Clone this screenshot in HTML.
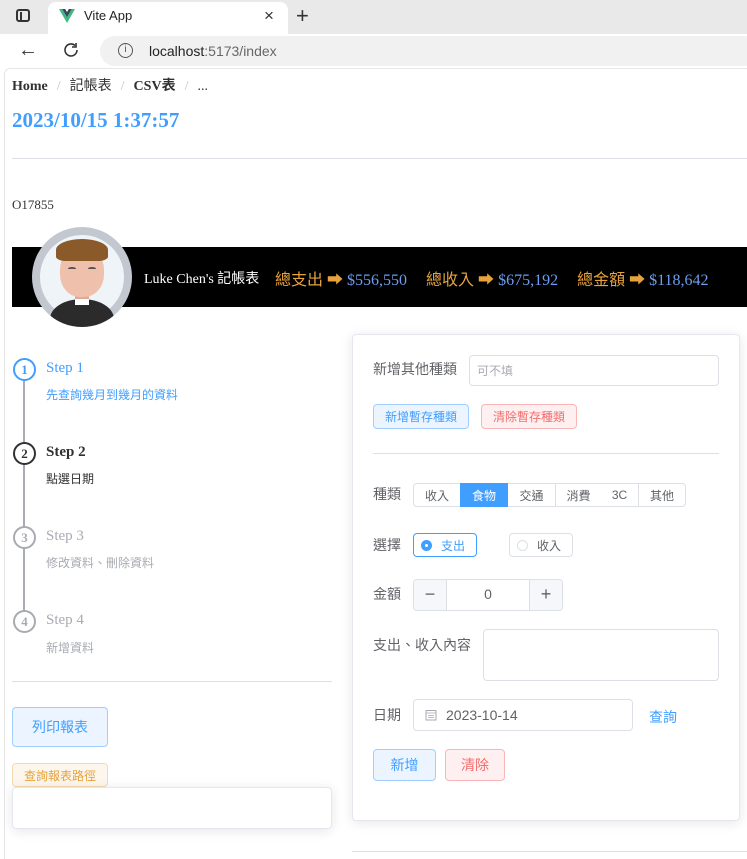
<!DOCTYPE html>
<html><head><meta charset="utf-8"><style>
*{box-sizing:border-box;margin:0;padding:0}
body{width:747px;height:859px;overflow:hidden;background:#fff;position:relative;font-family:"Liberation Sans","Noto Sans CJK TC",sans-serif;color:#606266}
.a{position:absolute}
.serif{font-family:"Liberation Serif","Noto Serif CJK SC",serif}
.cjk{font-family:"Liberation Sans","Noto Sans CJK TC",sans-serif}
.btn{position:absolute;border:1px solid;border-radius:4px;display:flex;align-items:center;justify-content:center;font-size:13px}
.bp{background:#ecf5ff;border-color:#a0cfff;color:#409eff}
.bd{background:#fef0f0;border-color:#fab6b6;color:#f56c6c}
.lbl{position:absolute;font-size:14px;color:#606266;line-height:20px}
.inp{position:absolute;border:1px solid #dcdfe6;border-radius:4px;background:#fff}
.seg{position:absolute;top:483px;height:24px;border:1px solid #dcdfe6;font-size:12px;display:flex;align-items:center;justify-content:center;color:#606266;background:#fff}
.circ{position:absolute;left:13px;width:23px;height:23px;border:2px solid;border-radius:50%;background:#fff;font-family:"Liberation Serif",serif;font-weight:bold;font-size:13px;display:flex;align-items:center;justify-content:center}
.st{position:absolute;left:46px;font-family:"Liberation Serif",serif;font-size:15px}
.sd{position:absolute;left:46px;font-size:12px}
</style></head><body>
<!-- browser chrome -->
<div class="a" style="left:0;top:0;width:747px;height:34px;background:#e9e9e9"></div>
<div class="a" style="left:48px;top:2px;width:240px;height:32px;background:#fff;border-radius:8px 8px 0 0"></div>
<div class="a" style="left:16px;top:9px;width:14px;height:13px;border:2px solid #333;border-radius:3px"></div>
<div class="a" style="left:16px;top:12px;width:6px;height:10px;border-right:2px solid #333"></div>
<svg class="a" style="left:59px;top:9px" width="16" height="14" viewBox="0 0 16 14"><path d="M0 0h3.2L8 8.3 12.8 0H16L8 14z" fill="#41b883"/><path d="M3.2 0h3L8 3.1 9.8 0h3L8 8.3z" fill="#35495e"/></svg>
<div class="a" style="left:84px;top:8px;font-size:13px;color:#222">Vite App</div>
<div class="a" style="left:264px;top:6px;font-size:17px;color:#333">×</div>
<div class="a" style="left:296px;top:3px;font-size:22px;color:#333;font-weight:300">+</div>
<div class="a" style="left:0;top:34px;width:747px;height:34px;background:#fff"></div>
<div class="a" style="left:18px;top:39px;font-size:20px;color:#333">←</div>
<svg class="a" style="left:62px;top:41px" width="18" height="18" viewBox="0 0 18 18"><path d="M15 9a6 6 0 1 1-2-4.5" fill="none" stroke="#333" stroke-width="1.6"/><path d="M14 2v4h-4" fill="none" stroke="#333" stroke-width="1.6"/></svg>
<div class="a" style="left:100px;top:36px;width:660px;height:30px;background:#f1f1f1;border-radius:15px"></div>
<div class="a" style="left:118px;top:43px;width:15px;height:15px;border:1.5px solid #555;border-radius:50%;font-size:10px;text-align:center;line-height:12px;color:#555">i</div>
<div class="a" style="left:149px;top:43px;font-size:14px;color:#222">localhost<span style="color:#666">:5173/index</span></div>
<div class="a" style="left:4px;top:68px;width:743px;height:791px;border-left:1px solid #e6e6e6;border-top:1px solid #e6e6e6;border-radius:6px 0 0 0"></div>

<div class="a serif" style="left:12px;top:75px;font-size:14px;color:#303133;white-space:nowrap"><b>Home</b><span style="color:#c0c4cc;margin:0 9px;font-weight:normal">/</span><span class="cjk">記帳表</span><span style="color:#c0c4cc;margin:0 9px">/</span><b>CSV<span class="cjk" style="font-weight:bold">表</span></b><span style="color:#c0c4cc;margin:0 9px">/</span>...</div>
<div class="a serif" style="left:12px;top:108px;font-size:21px;font-weight:bold;color:#409eff">2023/10/15 1:37:57</div>
<div class="a" style="left:12px;top:158px;width:735px;height:1px;background:#dcdfe6"></div>
<div class="a serif" style="left:12px;top:197px;font-size:13px;color:#333">O17855</div>

<div class="a" style="left:12px;top:247px;width:735px;height:60px;background:#000"></div>
<div class="a" style="left:32px;top:227px;width:100px;height:100px;border-radius:50%;background:#c2c7d0;overflow:hidden">
 <div class="a" style="left:8px;top:8px;width:84px;height:84px;border-radius:50%;background:#eef4f8"></div>
 <div class="a" style="left:18px;top:72px;width:64px;height:40px;border-radius:50% 50% 0 0;background:#2b2b2b"></div>
 <div class="a" style="left:43px;top:68px;width:14px;height:10px;background:#fff"></div>
 <div class="a" style="left:43px;top:56px;width:14px;height:16px;background:#e0a993"></div>
 <div class="a" style="left:28px;top:20px;width:44px;height:50px;border-radius:45%;background:#efc1ad"></div>
 <div class="a" style="left:24px;top:12px;width:52px;height:22px;border-radius:50% 50% 20% 20%;background:#8a5a2b"></div>
 <div class="a" style="left:36px;top:40px;width:8px;height:3px;border-top:2px solid #555;border-radius:50%"></div>
 <div class="a" style="left:56px;top:40px;width:8px;height:3px;border-top:2px solid #555;border-radius:50%"></div>
</div>
<div class="a serif" style="left:144px;top:268px;font-size:14px;color:#fff;white-space:nowrap">Luke Chen's <span class="cjk">記帳表</span></div>
<div class="a serif" style="left:275px;top:266px;font-size:16px;white-space:nowrap;color:#e6a23c"><span class="cjk">總支出</span> ➡ <span style="color:#6d9df0">$556,550</span><span style="display:inline-block;width:19px"></span><span class="cjk">總收入</span> ➡ <span style="color:#6d9df0">$675,192</span><span style="display:inline-block;width:19px"></span><span class="cjk">總金額</span> ➡ <span style="color:#6d9df0">$118,642</span></div>

<!-- steps -->
<div class="a" style="left:23px;top:370px;width:2px;height:252px;background:#a8abb2"></div>
<div class="circ" style="top:358px;border-color:#409eff;color:#409eff">1</div>
<div class="circ" style="top:442px;border-color:#303133;color:#303133">2</div>
<div class="circ" style="top:526px;border-color:#a8abb2;color:#a8abb2">3</div>
<div class="circ" style="top:610px;border-color:#a8abb2;color:#a8abb2">4</div>
<div class="st" style="top:360px;color:#409eff">Step 1</div>
<div class="sd" style="top:386px;color:#409eff">先查詢幾月到幾月的資料</div>
<div class="st" style="top:444px;color:#303133;font-weight:bold">Step 2</div>
<div class="sd" style="top:470px;color:#303133">點選日期</div>
<div class="st" style="top:528px;color:#a8abb2">Step 3</div>
<div class="sd" style="top:554px;color:#a8abb2">修改資料、刪除資料</div>
<div class="st" style="top:612px;color:#a8abb2">Step 4</div>
<div class="sd" style="top:639px;color:#a8abb2">新增資料</div>
<div class="a" style="left:12px;top:681px;width:320px;height:1px;background:#dcdfe6"></div>
<div class="btn bp" style="left:12px;top:707px;width:96px;height:40px;font-size:14px">列印報表</div>
<div class="btn" style="left:12px;top:763px;width:96px;height:24px;background:#fdf6ec;border-color:#f5dab1;color:#e6a23c;font-size:12px">查詢報表路徑</div>
<div class="a" style="left:12px;top:787px;width:320px;height:42px;border:1px solid #e4e7ed;border-radius:4px;box-shadow:0 2px 12px rgba(0,0,0,.1);background:#fff"></div>

<!-- right card -->
<div class="a" style="left:352px;top:334px;width:388px;height:487px;border:1px solid #e4e7ed;border-radius:4px;box-shadow:0 2px 12px rgba(0,0,0,.1);background:#fff"></div>
<div class="lbl" style="left:373px;top:359px">新增其他種類</div>
<div class="inp" style="left:469px;top:355px;width:250px;height:31px"></div>
<div class="a" style="left:477px;top:362px;font-size:12px;color:#a8abb2">可不填</div>
<div class="btn bp" style="left:373px;top:404px;width:96px;height:25px;font-size:12px">新增暫存種類</div>
<div class="btn bd" style="left:481px;top:404px;width:96px;height:25px;font-size:12px">清除暫存種類</div>
<div class="a" style="left:373px;top:453px;width:346px;height:1px;background:#dcdfe6"></div>

<div class="lbl" style="left:373px;top:484px">種類</div>
<div class="seg" style="left:413px;width:48px;border-radius:4px 0 0 4px">收入</div>
<div class="seg" style="left:460px;width:48px;background:#409eff;border-color:#409eff;color:#fff">食物</div>
<div class="seg" style="left:508px;width:48px;border-left:none">交通</div>
<div class="seg" style="left:555px;width:47px">消費</div>
<div class="seg" style="left:601px;width:38px;border-left:none">3C</div>
<div class="seg" style="left:638px;width:48px;border-radius:0 4px 4px 0">其他</div>

<div class="lbl" style="left:373px;top:535px">選擇</div>
<div class="a" style="left:413px;top:533px;width:64px;height:24px;border:1px solid #409eff;border-radius:4px"></div>
<div class="a" style="left:421px;top:540px;width:11px;height:11px;border-radius:50%;background:#409eff"></div>
<div class="a" style="left:425px;top:544px;width:3px;height:3px;border-radius:50%;background:#fff"></div>
<div class="a" style="left:441px;top:537px;font-size:12px;color:#409eff">支出</div>
<div class="a" style="left:509px;top:533px;width:64px;height:24px;border:1px solid #dcdfe6;border-radius:4px"></div>
<div class="a" style="left:517px;top:540px;width:11px;height:11px;border-radius:50%;border:1px solid #dcdfe6"></div>
<div class="a" style="left:537px;top:537px;font-size:12px;color:#606266">收入</div>

<div class="lbl" style="left:373px;top:584px">金額</div>
<div class="inp" style="left:413px;top:579px;width:150px;height:32px"></div>
<div class="a" style="left:414px;top:580px;width:33px;height:30px;background:#f5f7fa;border-right:1px solid #dcdfe6;border-radius:4px 0 0 4px;text-align:center;line-height:28px;font-size:18px;color:#606266">−</div>
<div class="a" style="left:529px;top:580px;width:33px;height:30px;background:#f5f7fa;border-left:1px solid #dcdfe6;border-radius:0 4px 4px 0;text-align:center;line-height:28px;font-size:18px;color:#606266">+</div>
<div class="a" style="left:447px;top:586px;width:82px;text-align:center;font-size:14px">0</div>

<div class="lbl" style="left:373px;top:635px">支出、收入內容</div>
<div class="inp" style="left:483px;top:629px;width:236px;height:52px"></div>

<div class="lbl" style="left:373px;top:705px">日期</div>
<div class="inp" style="left:413px;top:699px;width:220px;height:32px"></div>
<svg class="a" style="left:425px;top:709px" width="12" height="12" viewBox="0 0 12 12"><rect x="1" y="1.5" width="10" height="9.5" fill="none" stroke="#a8abb2"/><path d="M1 4h10M3 6.5h6M3 8.5h6" stroke="#a8abb2" stroke-width=".8"/></svg>
<div class="a" style="left:446px;top:707px;font-size:14px;color:#606266">2023-10-14</div>
<div class="a" style="left:649px;top:707px;font-size:14px;color:#409eff">查詢</div>
<div class="btn bp" style="left:373px;top:749px;width:63px;height:32px;font-size:14px">新增</div>
<div class="btn bd" style="left:445px;top:749px;width:60px;height:32px;font-size:14px">清除</div>
<div class="a" style="left:352px;top:851px;width:395px;height:1px;background:#dcdfe6"></div>
</body></html>
